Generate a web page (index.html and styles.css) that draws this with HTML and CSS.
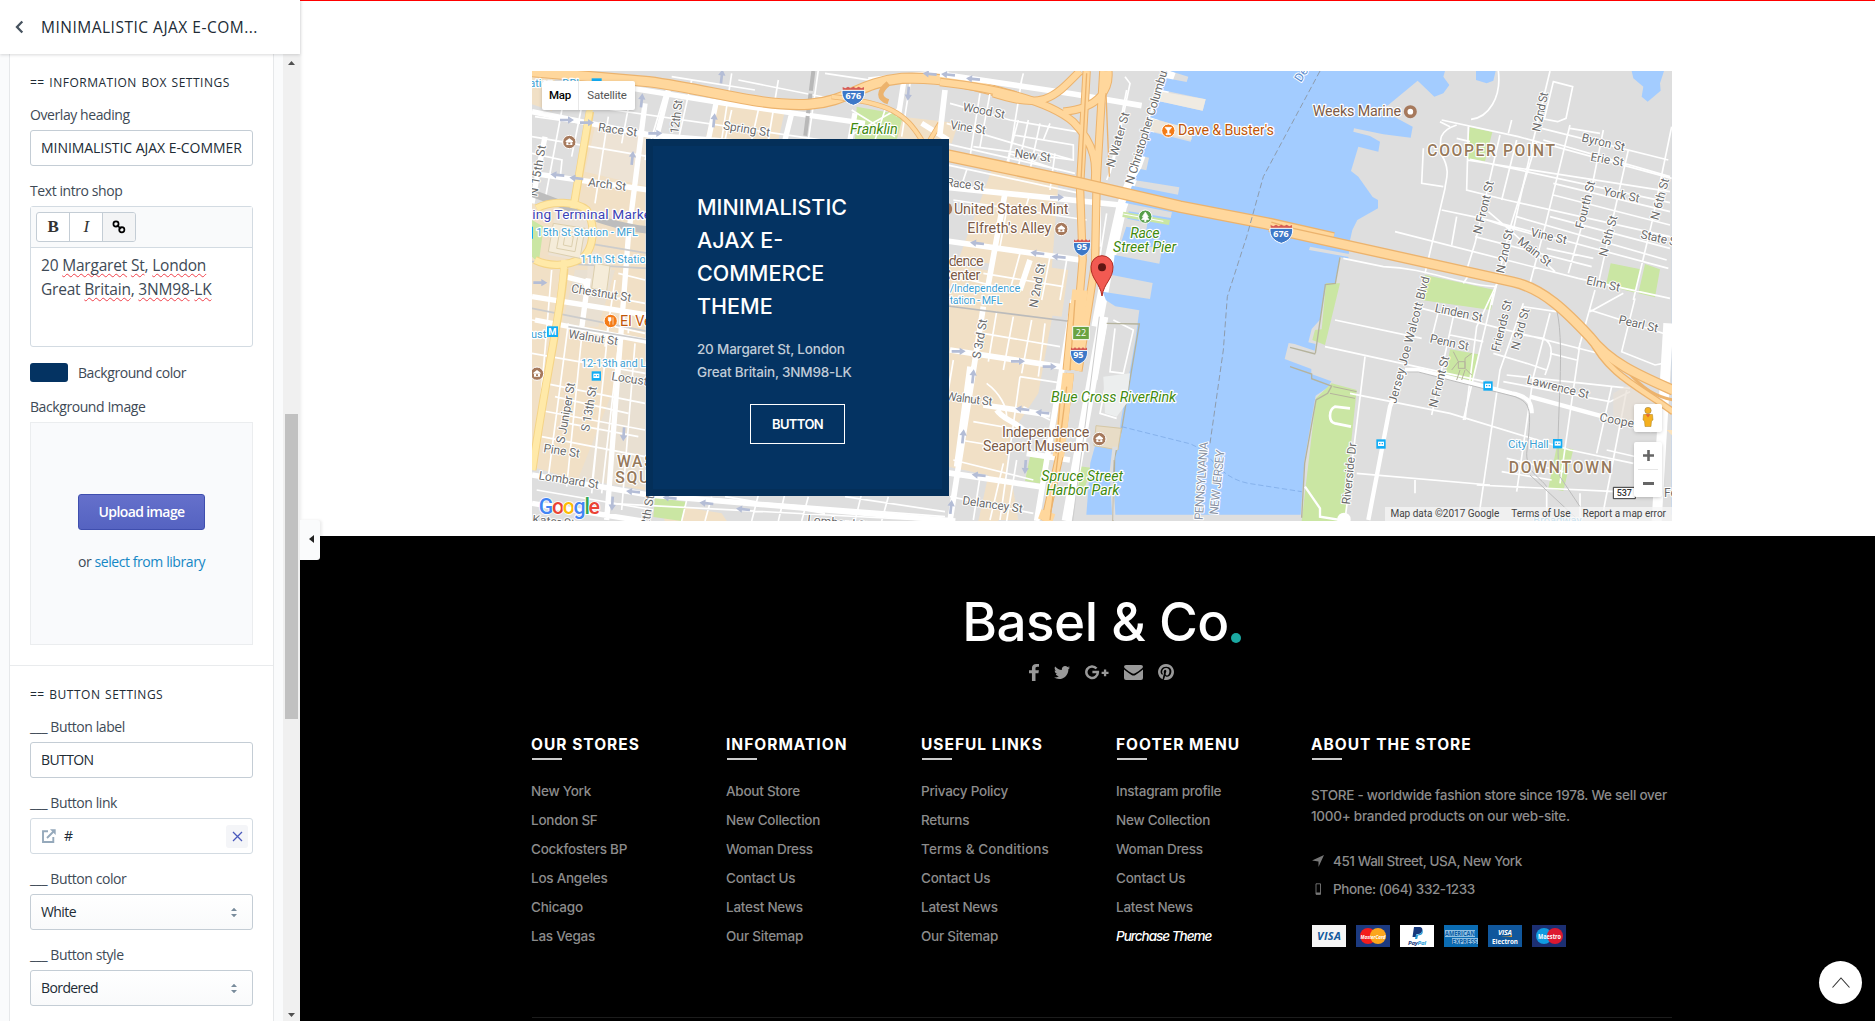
FILE: index.html
```html
<!DOCTYPE html>
<html lang="en">
<head>
<meta charset="utf-8">
<title>Theme editor</title>
<link rel="stylesheet" href="styles.css">
</head>
<body>
<div class="app">
  <aside class="sidebar">
    <header class="sidebar-head">
      <svg class="back" width="9" height="14" viewBox="0 0 9 14"><path d="M7.3 1.5 2 7l5.3 5.5"/></svg>
      <h1>MINIMALISTIC AJAX E-COM...</h1>
    </header>
    <div class="sidebar-body">
      <div class="panel">
        <section class="group">
          <h2>== INFORMATION BOX SETTINGS</h2>
          <label>Overlay heading</label>
          <div class="input">MINIMALISTIC AJAX E-COMMER</div>
          <label>Text intro shop</label>
          <div class="editor">
            <div class="toolbar"><div class="tools"><span class="tool"><b>B</b></span><span class="tool"><i>I</i></span><span class="tool active"><svg width="14" height="14" viewBox="0 0 14 14"><g fill="none" stroke="#000" stroke-width="1.700"><circle cx="4" cy="4" r="2.6"/><circle cx="9.8" cy="9.8" r="2.6"/><path d="M5 5l4 4"/></g></svg></span></div></div>
            <div class="editor-text">20 <u>Margaret</u> <u>St</u>, <u>London</u><br>Great <u>Britain</u>, <u>3NM98</u>-<u>LK</u></div>
          </div>
          <div class="swatch-row"><span class="swatch"></span><span>Background color</span></div>
          <label>Background Image</label>
          <div class="dropzone">
            <button class="upload">Upload image</button>
            <p>or <a>select from library</a></p>
          </div>
        </section>
        <section class="group">
          <h2>== BUTTON SETTINGS</h2>
          <label>___ Button label</label>
          <div class="input short">BUTTON</div>
          <label>___ Button link</label>
          <div class="input link">
            <svg width="14" height="14" viewBox="0 0 14 14"><path d="M6 2.2H1V13h10.300V8M5 9l6.500-6.500" fill="none" stroke="#95a9bb" stroke-width="1.900"/><path d="M8 .3h5.700V6z" fill="#95a9bb"/></svg>
            <span>#</span>
            <span class="clear"><svg width="11" height="11" viewBox="0 0 11 11"><path d="M1 1l9 9M10 1l-9 9" stroke="#4959bd" stroke-width="1.300"/></svg></span>
          </div>
          <label>___ Button color</label>
          <div class="input select"><span>White</span><svg width="8" height="11" viewBox="0 0 8 11"><path d="M1 4h6L4 .7zM1 7h6L4 10.300z"/></svg></div>
          <label>___ Button style</label>
          <div class="input select"><span>Bordered</span><svg width="8" height="11" viewBox="0 0 8 11"><path d="M1 4h6L4 .7zM1 7h6L4 10.300z"/></svg></div>
        </section>
      </div>
      <div class="scrollbar"><svg width="7" height="4" viewBox="0 0 7 4"><path d="M0 4l3.500-4L7 4z"/></svg><div class="thumb"></div><svg width="7" height="4" viewBox="0 0 7 4"><path d="M0 0l3.500 4L7 0z"/></svg></div>
    </div>
    <div class="collapse"><svg width="5" height="8" viewBox="0 0 5 8"><path d="M5 0v8L0 4z"/></svg></div>
  </aside>

  <main class="preview">
    <div class="map-section">
      <div class="map">
        <svg class="map-canvas" width="1140" height="450" viewBox="21 33 3420 1350">
          <defs>
            <g id="shield"><path d="M-34 -16h68c2 22-10 38-34 45-24-7-36-23-34-45z" fill="#3c78c8" stroke="#fff" stroke-width="3"/><path d="M-32-18v-8l8 4 8-5 8 5 8-5 8 5 8-5 8 5 8-4v8z" fill="#d65a55"/></g>
            <g id="arrow"><path d="M-20-4H4v-7l18 11L4 11V4h-24z" fill="#b4bdd6"/></g>
            <g id="museum"><circle r="20" fill="#a6795c" stroke="#fff" stroke-width="3"/><path d="M-11-3L0-11 11-3v3h-22zM-9 1h18v8H-9z" fill="#fff"/><path d="M-3 2h6v5h-6z" fill="#a6795c"/></g>
            <g id="stop"><path d="M-14-14h28v28h-28z" fill="#12adf5"/><path d="M-9-7H9V6H-9z" fill="#fff"/><path d="M-6-3h4v4h-4zM2-3h4v4H2z" fill="#12adf5"/></g>
          </defs>
          <rect x="21" y="33" width="3420" height="1350" fill="#dedede"/>

          <!-- commercial blocks and parks, west side -->
          <g fill="#f1e0c6">
            <path d="M21 430L140 450l50-260 170 40v1060l-240-40L21 1220z"/>
            <path d="M21 33l70 20-10 100-60-20zM570 130l210 20-20 90H540zM215 190l150 30v140l-180-30zM1400 330l200 40-20 260-280-30zM1270 610l330 60-60 330-80 120-50 260h70l-20-120-190-40z"/>
            <path d="M1100 230l180 20 20-60-170-20zM410 1330l180 30 20 30H420zM1410 600l220 30-20 140-240-30zM1400 1200h50l-30 183h-60z"/>
          </g>
          <path d="M150 630h120l-50 170H110zM300 900h60v380H150z" fill="#dfdfdf" opacity=".45"/>
          <g fill="#ede3d5"><path d="M210 200l160 30v150l-190-45zM190 570l75 25-20 100-60-10zM90 455h110l-20 150-110-20z"/></g>
          <g fill="#cae6a3"><path d="M995 140l140 25-20 75H990zM21 480l35 20-15 110-20-20zM390 1313l92 12-12 58-85-12zM1515 1190l60 8-15 75-60-10zM1658 1218l40 5-20 65h-30z"/></g>

          <!-- streets, west side -->
          <g fill="none" stroke="#fff" stroke-width="5">
            <path d="M120 100L60 420M250 170l-40 260M420 100l-60 200M620 150l-20 90M760 60l-30 180M880 30l-30 210M1160 40l-30 190M1080 150l-30 90M100 50l700 110M60 120l900 130M30 170l500 70M21 230l350 60M180 90l-40 200M500 60l-40 180M620 40l-30 200M700 150l-20 90M320 90l-30 160M21 280l90 20-5 50M440 50l250 40M900 40l200 30M640 60l300 60M980 150l130 80M1130 140l-160 90"/>
            <path d="M80 630l-50 600M130 790L70 1250M175 780l-50 500M250 800l-50 500M280 860l-50 440M230 1000l-30 280M330 850l-40 500M21 880l340 60M60 970l300 60M40 1050l320 60M50 1130l310 60M35 1290l350 60M130 1090l210 40M90 1010l220 50M21 780l180 30M270 660l-30 200M200 700l160 30M280 640l80 20M270 800l90 20M310 760v60"/>
            <path d="M490 1300l-20 83M560 1310l-20 73M700 1305l-20 78M780 1300l-20 83M850 1310l-20 73M1010 1300l-20 83M1090 1310l-20 73M250 1330l1000 53M480 1310l780 60M600 1310l300 50M960 1310l300 45"/>
          </g>
          <g fill="none" stroke="#fff" stroke-width="16">
            <path d="M21 155l350 70 500 40M60 230L21 430M21 340l350 50M360 130l-50 400-65 850M21 710l345 55M30 780l340 65M21 1245l350 60 920 78M21 1330l330 53M430 90L390 250M575 120l-25 120M800 160l-20 80M990 160l-15 80M290 80L600 130l420 60M190 655l-20 150M120 650l60 15 10 25M1030 60l240-25M1140 40l-20 130M1190 190l80 50"/>
          </g>
          <path d="M21 400c120 40 220 100 350 110" fill="none" stroke="#bdbdbd" stroke-width="22"/>
          <path d="M21 605l345 20M190 550l180 30M130 800l240 40M21 745l350 70" fill="none" stroke="#ccc" stroke-width="5"/>
          <g fill="none" stroke="#f5d486" stroke-width="25"><path d="M195 155L145 445M35 445c45-25 120-20 150 5 30 50 20 120-15 145-45 25-100 25-140 5M118 625C110 750 70 900 22 1230"/></g>
          <g fill="none" stroke="#ffe9a8" stroke-width="19"><path d="M195 145L145 445M35 445c45-25 120-20 150 5 30 50 20 120-15 145-45 25-100 25-140 5M118 600C110 750 70 900 22 1230"/></g>
          <g fill="#f5ecd9" stroke="#dccfae" stroke-width="3"><path d="M85 490l95 15-15 90-95-20zM105 510l55 10-10 55-55-10zM120 525l25 5-5 30-25-5zM210 610l45 8-10 75-45-8z"/></g>
          <path d="M865 33l-25 200" stroke="#b8b8b8" stroke-width="12" fill="none" stroke-dasharray="60 8"/>

          <!-- highway across the north-west -->
          <g fill="none" stroke="#ecb36d" stroke-width="34"><path d="M21 35l350 30c190 25 330 75 480 68 120-8 150-65 280-78 150-5 230 25 340 55"/></g>
          <g fill="none" stroke="#ffd79c" stroke-width="27"><path d="M21 35l350 30c190 25 330 75 480 68 120-8 150-65 280-78 150-5 230 25 340 55"/></g>
          <path d="M920 110c180 20 220 50 270 130M1090 70c-30 25-30 45 0 55M1245 190l-30 50" fill="none" stroke="#ecb36d" stroke-width="16"/>
          <path d="M920 110c180 20 220 50 270 130M1245 190l-30 50" fill="none" stroke="#ffd79c" stroke-width="11"/>

          <!-- central district and river -->
          <g transform="translate(1245 0)">
            <g fill="none" stroke="#fff" stroke-width="5">
              <path d="M120 100L90 290M150 100l-30 160M245 60l-40 250M235 180l-40 150M265 180l-30 140M300 190l-30 140M330 190l-20 50M30 130l180 50 200 35M20 190l200 60 180 50M15 250l390 90M100 260l300 40V255l-180-30M205 280l150 50M345 280l-15 110M0 310l420 90M80 330l-20 60M555 50l15 20-50 240-20 50M560 90l-50 250M250 40l-10 40"/>
              <path d="M200 450l-20 110M270 400l-15 50M40 420l400 60M240 580l-30 110M330 590l-25 130M380 600l-20 120M130 640l240 40M10 640l200 50M170 755l-25 150M220 770l-30 160M275 780l-30 160M315 790l-20 160M130 820l230 40M40 900l-20 120M240 950l-60 430M140 970c40 30 60 70 60 100M240 950l130 20M100 1085l200 35M250 1040l80 40M40 1200l240 60M120 1250l-20 130M190 1210l-40 170M30 1310l250 50M60 1140l180 30M230 1200l-30 183"/>
              <path d="M480 440v120M500 460l-25 160M470 780l30 10-30 170M520 780l60 30-30 130-40-5 15-130M500 960l-20 100 50 15"/>
            </g>
            <g fill="none" stroke="#fff" stroke-width="17">
              <path d="M0 42l400 60 205 35M15 90L0 220M195 400L140 700M0 380l540 55M0 540l420 60M130 740L30 1383M30 870l330 50M90 920l-40 300M130 1035l200 30M170 1050c20 30 50 30 80 60M0 1235l300 45M260 1180l130 20M400 720L290 1383M270 600l-30 90"/>
              <path d="M490 770L380 1383" stroke-width="30"/><path d="M692 33L545 440 500 640 470 800" stroke-width="32"/>
            </g>
            <path d="M478 770L398 1383" fill="none" stroke="#cecece" stroke-width="3"/>
            <path d="M0 735l380 48c60-5 40-60 42-90" fill="none" stroke="#bbb" stroke-width="5"/>

            <path fill="#a3ccff" d="M690 33l55 17-5 16-60-11-15 35 132 28-9 34-133-30-25 50 130 40-8 33-128-32-18 75 21 5-8 38-17-4-20 33 136 22-4 22-138-27-20 52 140 28-4 17-126-20-4 22 60 12-3 22-60-10-15 45 122 22-8 44-134-26-8 60 122 24-8 48-142-22 10 26 28 18 72 12-12 90-43 238-7 60-70 15-15 55-12 155H2196V33z"/>
            <path d="M500 790l98 2-52 310-22 90-4 190" fill="none" stroke="#b5b39d" stroke-width="4"/>
            <path d="M468 1097l76 8-10 65-72-13z" fill="#e8dcc6" stroke="#d5c7a5" stroke-width="3"/>
            <path d="M532 1165h-10l-8 70 8 146" fill="none" stroke="#dedede" stroke-width="10"/>
            <path d="M522 1200l-4 183" fill="none" stroke="#b5a98d" stroke-width="2"/>
            <path d="M490 950l80-10-10 90-30 40-35-10z" fill="#eceeee"/>
            <path d="M665 95l132 23-9 34-130-28z" fill="#f0ebe2"/><path d="M630 175l130 33-6 32-125-28z" fill="#ece5da"/>
            <path d="M550 455l140 25-3 15-140-24z" fill="#cae6a3"/><path d="M550 462l120 22" stroke="#fff" stroke-width="3"/>

            <!-- interstate 95 and the bridge -->
            <g fill="none" stroke="#ecb36d" stroke-width="25">
              <path d="M0 66c180 20 330 60 400 120 90 90 60 170 65 190M440 33L420 380l8 220-28 330M490 33l-20 330-5 250-50 320M400 730l-20 200M390 940l-30 240M360 1180l-45 203M160 100c150 50 180 15 260-67M370 155c110-10 140-70 135-122" />
            </g>
            <g fill="none" stroke="#ffd79c" stroke-width="19">
              <path d="M0 66c180 20 330 60 400 120 90 90 60 170 65 190M440 33L420 380l8 220-28 330M490 33l-20 330-5 250-50 320M400 730l-20 200M390 940l-30 240M360 1180l-45 203M160 100c150 50 180 15 260-67M370 155c110-10 140-70 135-122" />
            </g>
            <g fill="none" stroke="#ffd79c"><path d="M420 690L395 925" stroke-width="46"/><path d="M385 940L355 1190" stroke-width="34"/><path d="M325 1355l-10 28" stroke-width="44"/></g>
            <path d="M405 720l-15 210M380 980l-50 400M362 1000l-14 180M440 40l-18 340M498 100l10 250" fill="none" stroke="#ecb36d" stroke-width="4"/>
            <path d="M0 282l420 88 300 70 260 50 200 45" fill="none" stroke="#ecb36d" stroke-width="38"/>
            <path d="M0 282l420 88 300 70 260 50 200 45" fill="none" stroke="#ffd79c" stroke-width="30"/>

            <path d="M1140 33L970 350 920 530 862 710 850 870 810 1150" fill="none" stroke="#8e9cad" stroke-width="3" stroke-dasharray="18 9"/>
            <path d="M545 1100l200 50c70 20 80 100 180 120l160 25" fill="none" stroke="#86b2ec" stroke-width="3" stroke-dasharray="16 8"/>
          </g>

          <!-- Camden side -->
          <g transform="translate(2295 0)">
            <path fill="#dedede" d="M1146 33H465l-5 17 18 25-18 25-27 10-50-48-88 73-23 15 46 23 50 27-6 33-82-10-88-18-2 10 50 13 30 17-5 30-60-15-22 73 22 17 43 61 16 9v25l-62 35-15 30-7 31-5 55-25-5-15 80-27 3-3 20-15 85-25 28-10 40 22 5-3 20-60-20-18-3-12 48 80 30v15l60 22-10 18-37 25-33 190-13 183h1114z"/>
            <path fill="#dedede" d="M60 560l160 30-5 8-158-28z"/>
            <path fill="#a3ccff" d="M558 33v27l32 10 20-8 7-29zM1025 33l5 22 30 25-5 30 18 15 39-33-2-22 12-37z"/>
            <g fill="#cae6a3"><path d="M540 202l67 14-22 88-57-10zM962 610l90 18-16 70-88-22zM1065 612l45 16-15 84-50-12zM405 645l210 45-12 60-210-30zM108 670h42l-45 185-38-15 8-30 20-2zM125 970l75 20-20 190-15 203H35l43-368zM480 868l85 15-18 80-80-20zM800 1160l50 8-30 125-45-8z"/></g>
            <path d="M150 592l-14 78-30 4-30 206" fill="none" stroke="#b5b39d" stroke-width="4"/>
            <path d="M0 862l76 20M0 920l65 22v14l60 22-12 22-35 20-34 190-9 163" fill="none" stroke="#b5b39d" stroke-width="4"/>
            <path d="M120 1000l75 15M130 980l70 15" stroke="#b5b39d" stroke-width="3"/>
            <path d="M180 1045l-45-5c-20 10-20 45 0 50l48 10" fill="none" stroke="#fff" stroke-width="8"/>
            <path d="M45 1280l45 65v25l60 10" fill="none" stroke="#fff" stroke-width="7"/>
            <circle cx="162" cy="1378" r="20" fill="#fff"/>

            <g fill="none" stroke="#fff" stroke-width="7">
              <path d="M455 180l230 50 460 125M625 33c10 80-30 140-82 145M780 33L730 240 645 620 560 800 525 1080M480 200l-30-15M500 195c-60 20-50 50-45 90 30 50 10 80 10 100L405 640M400 265l-5 105 65 10M535 200l-5 190 120 30 490 110M540 298l600 130M500 235l40 10M530 300l610 95" stroke-width="5"/>
              <path d="M455 450l120 25 560 150M315 515l550 140 275 60M630 225l-75 325-25 80M680 240l-45 180M740 245l-80 260-55 230M840 195L765 500l-45 170M940 210l-40 200-65 230M1015 270l-90 400M1145 200l-60 290-55 230M665 180l-10 40M595 455l70 60 130 120M575 475l60 20 100 30M790 405l350 90M790 370l350 85M755 205l380 95M840 205l90 15M760 240l380 110M780 470l360 95M680 470l450 130M500 470l-15 85M770 565l140 30M555 530l350 90M790 65l58 15-20 95-25 10-40-8z" stroke-width="5"/>
              <path d="M160 595l120 25c140 5 220 55 340 60M540 640l-20 30M135 780l260 55M105 860l480 105M395 745l550 140M445 755l-20 80M490 770l-65 295M610 700L520 1080M700 730l-70 200-65 450M780 760l-50 190-50 345M700 740l100 15M640 965l320 60 60-30M650 945l370 40M670 820l90 15c40 20 20 70 5 110M480 825l100 20M780 880l80 20M610 880l100 30 60 20M870 850l-60 420M915 690l-50 180M1000 700l-100 55M1035 715l-40 160 100 40 25-5M900 750l250 80M965 980l-45 200M1010 990l-75 390M180 1000l300 60 360 110 190 40M225 890l-60 490M200 1240l400 35M560 1275l420 20M375 1260v40M770 1290v90M870 1300v70M635 1235l150 25M650 1195l170 40M950 1170l130 30" stroke-width="5"/>
            </g>
            <path d="M345 930l-45 110-65 340M345 930h40l280 70c60 10 60 40 60 60M720 1010l220 60" fill="none" stroke="#fff" stroke-width="13"/>
            <path d="M345 936l40 0 290 74c50 20 50 40 35 170 0 60 40 70 60 100M720 1245l150 140M800 750c30 120-10 400 10 500l60 90" fill="none" stroke="#bcbcbc" stroke-width="3"/>
            <path d="M1135 790l-35 593" stroke="#fff" stroke-width="30"/>
            <path d="M485 930l20-25-15-30M545 945l-20-20v-30l20-15M505 905h20v20h-20zM510 930l-10 30M525 930l-10 30" fill="none" stroke="#b5b39d" stroke-width="3"/>
            <path d="M970 1000l70-40 80 60-40 90-110-30z" fill="#e8e0d5" opacity=".7"/>
            <path d="M985 960l80-5-30 20M1130 1110h20v20z" fill="#fbe3bd"/>
            <g fill="none" stroke="#ecb36d" stroke-width="30"><path d="M-60 500L0 518l670 148c90 20 160 90 230 165 60 80 160 120 250 160" stroke-width="33"/><path d="M900 831c60 120 150 150 250 225" stroke-width="22"/><path d="M1010 930c50 60 90 80 140 90" stroke-width="9"/></g>
            <g fill="none" stroke="#ffd79c" stroke-width="24"><path d="M-60 500L0 518l670 148c90 20 160 90 230 165 60 80 160 120 250 160" stroke-width="25"/><path d="M900 831c60 120 150 150 250 225" stroke-width="14"/></g>
          </g>

          <!-- one-way arrows -->
          <use href="#arrow" x="125" y="180"/><use href="#arrow" x="185" y="188"/><use href="#arrow" x="45" y="668"/>
          <use href="#arrow" transform="translate(98 345) rotate(186)"/><use href="#arrow" transform="translate(155 355) rotate(186)"/><use href="#arrow" transform="translate(322 295) rotate(-84)"/><use href="#arrow" transform="translate(350 122) rotate(-84)"/><use href="#arrow" transform="translate(567 182) rotate(-84)"/><use href="#arrow" transform="translate(590 50) rotate(-84)"/><use href="#arrow" transform="translate(1150 100) rotate(94)"/><use href="#arrow" transform="translate(296 1122) rotate(94)"/><use href="#arrow" transform="translate(262 1330) rotate(94)"/>
          <use href="#arrow" transform="translate(325 1295) rotate(186)"/><use href="#arrow" transform="translate(435 1314) rotate(186)"/><use href="#arrow" transform="translate(545 1330) rotate(186)"/><use href="#arrow" transform="translate(655 1348) rotate(186)"/><use href="#arrow" transform="translate(1215 42) rotate(186)"/><use href="#arrow" transform="translate(1270 44) rotate(186)"/><use href="#arrow" transform="translate(1345 57) rotate(186)"/><use href="#arrow" x="390" y="220"/>
          <use href="#arrow" transform="translate(1595 412)"/><use href="#arrow" transform="translate(1357 550) rotate(186)"/><use href="#arrow" transform="translate(1538 580) rotate(186)"/><use href="#arrow" transform="translate(1602 591) rotate(186)"/><use href="#arrow" x="1300" y="874"/><use href="#arrow" x="1478" y="904"/><use href="#arrow" x="1573" y="920"/><use href="#arrow" transform="translate(1493 1048) rotate(186)"/><use href="#arrow" transform="translate(1553 1058) rotate(186)"/><use href="#arrow" transform="translate(1362 1246) rotate(186)"/><use href="#arrow" transform="translate(1501 1220) rotate(94)"/><use href="#arrow" transform="translate(1344 950) rotate(-84)"/><use href="#arrow" transform="translate(1314 1130) rotate(-84)"/><use href="#arrow" transform="translate(1278 1342) rotate(-84)"/>

          <!-- street labels -->
          <g class="street">
            <text transform="translate(218 213) rotate(8)" textLength="118">Race St</text>
            <text transform="translate(593 208) rotate(9)" textLength="142">Spring St</text>
            <text transform="translate(460 222) rotate(-83)" textLength="102">12th St</text>
            <text transform="translate(36 410) rotate(-80)" textLength="155">N 15th St</text>
            <text transform="translate(188 378) rotate(7)" textLength="115">Arch St</text>
            <text transform="translate(137 697) rotate(9)" textLength="182">Chestnut St</text>
            <text transform="translate(129 833) rotate(9)" textLength="150">Walnut St</text>
            <text transform="translate(258 960) rotate(9)">Locust St</text>
            <text transform="translate(118 1152) rotate(-80)" textLength="185">S Juniper St</text>
            <text transform="translate(192 1116) rotate(-80)" textLength="137">S 13th St</text>
            <text transform="translate(54 1176) rotate(9)" textLength="110">Pine St</text>
            <text transform="translate(40 1258) rotate(9)" textLength="182">Lombard St</text>
            <text transform="translate(368 1420) rotate(-80)">12th St</text>
            <text transform="translate(21 1390) rotate(6)">Kater St</text>
            <text transform="translate(846 1390) rotate(6)">Lombard St</text>
            <text transform="translate(1312 152) rotate(11)" textLength="128">Wood St</text>
            <text transform="translate(1274 206) rotate(9)" textLength="108">Vine St</text>
            <text transform="translate(1468 292) rotate(7)" textLength="108">New St</text>
            <text transform="translate(1262 378) rotate(7)" textLength="115">Race St</text>
            <text transform="translate(1767 324) rotate(-74)" textLength="170">N Water St</text>
            <text transform="translate(1824 375) rotate(-73)" textLength="372">N Christopher Columbus</text>
            <text transform="translate(1537 745) rotate(-80)" textLength="135">N 2nd St</text>
            <text transform="translate(1366 898) rotate(-80)" textLength="120">S 3rd St</text>
            <text transform="translate(1262 1020) rotate(7)" textLength="140">Walnut St</text>
            <text transform="translate(1311 1333) rotate(8)" textLength="182">Delancey St</text>
            <text transform="translate(2033 1381) rotate(-86)" textLength="235" fill="#8993a5">PENNSYLVANIA</text>
            <text transform="translate(2078 1365) rotate(-84)" textLength="195" fill="#8993a5">NEW JERSEY</text>
          </g>
          <g class="street" transform="translate(2295 0)">
            <text transform="translate(750 217) rotate(-78)" textLength="120">N 2nd St</text>
            <text transform="translate(873 244) rotate(13)" textLength="132">Byron St</text>
            <text transform="translate(900 302) rotate(10)" textLength="100">Erie St</text>
            <text transform="translate(938 405) rotate(12)" textLength="110">York St</text>
            <text transform="translate(1050 534) rotate(13)" textLength="120">State St</text>
            <text transform="translate(720 528) rotate(13)" textLength="110">Vine St</text>
            <text transform="translate(680 548) rotate(38)" textLength="118">Main St</text>
            <text transform="translate(887 672) rotate(13)" textLength="103">Elm St</text>
            <text transform="translate(573 524) rotate(-76)" textLength="162">N Front St</text>
            <text transform="translate(642 642) rotate(-78)" textLength="134">N 2nd St</text>
            <text transform="translate(880 508) rotate(-76)" textLength="146">Fourth St</text>
            <text transform="translate(950 592) rotate(-75)" textLength="126">N 5th St</text>
            <text transform="translate(1105 482) rotate(-75)" textLength="128">N 6th St</text>
            <text transform="translate(433 755) rotate(12)" textLength="145">Linden St</text>
            <text transform="translate(418 847) rotate(12)" textLength="118">Penn St</text>
            <text transform="translate(984 790) rotate(13)" textLength="120">Pearl St</text>
            <text transform="translate(628 877) rotate(-76)" textLength="158">Friends St</text>
            <text transform="translate(686 872) rotate(-75)" textLength="128">N 3rd St</text>
            <text transform="translate(440 1045) rotate(-76)" textLength="158">N Front St</text>
            <text transform="translate(318 1032) rotate(-75)" textLength="392">Jersey Joe Walcott Blvd</text>
            <text transform="translate(708 970) rotate(14)" textLength="192">Lawrence St</text>
            <text transform="translate(927 1083) rotate(11)" textLength="160">Cooper St</text>
            <text transform="translate(180 1334) rotate(-84)" textLength="186">Riverside Dr</text>
            <text x="1122" y="1312">Fe</text>
            <text transform="translate(32 68) rotate(-57)" fill="#5b8dd0">Delaware</text>
          </g>

          <!-- places -->
          <g class="place transit">
            <text x="2" y="82">tation - DRL</text>
            <text x="34" y="527" textLength="305">15th St Station - MFL</text>
            <text x="166" y="608" textLength="214">11th St Station</text>
            <text x="168" y="922" textLength="275">12-13th and Locust</text>
            <text x="18" y="835">ust</text>
            <text x="1274" y="697" textLength="212">/Independence</text>
            <text x="1274" y="732" textLength="158">tation - MFL</text>
            <text x="2949" y="1163" font-size="35" textLength="122">City Hall</text>
            <text x="3025" y="1393">Broadway</text>
            <text x="-2" y="477" font-size="41" fill="#3d43b5" textLength="394">ding Terminal Market</text>
          </g>
          <path d="M200 55h30v20h-30z" fill="#12adf5"/><path d="M21 500h3v36h-3z" fill="#12adf5"/>
          <path d="M66 799h33v32H66z" fill="#12adf5"/><text x="82" y="825" text-anchor="middle" font-size="28" font-weight="700" fill="#fff">M</text>
          <use href="#stop" x="214" y="948"/><use href="#stop" x="2889" y="978"/><use href="#stop" x="2568" y="1152"/><use href="#stop" x="3098" y="1151"/>
          <g class="place parkname">
            <text x="975" y="221" textLength="143">Franklin</text>
            <text x="1816" y="533" textLength="88">Race</text><text x="1764" y="576" textLength="190">Street Pier</text>
            <text x="1578" y="1026" textLength="375">Blue Cross RiverRink</text>
            <text x="1549" y="1263" textLength="245">Spruce Street</text><text x="1563" y="1305" textLength="220">Harbor Park</text>
          </g>
          <g class="place">
            <text x="1287" y="462" textLength="343">United States Mint</text>
            <text x="1327" y="519" textLength="252">Elfreth's Alley</text>
            <text x="1250" y="618" textLength="126">ndence</text><text x="1250" y="660" textLength="116">Center</text>
            <text x="1431" y="1132" textLength="262">Independence</text><text x="1374" y="1174" textLength="318">Seaport Museum</text>
            <text x="2363" y="169" textLength="265">Weeks Marine</text>
            <g fill="#c0560a"><text x="1959" y="225" textLength="288">Dave &amp; Buster's</text><text x="285" y="798">El Vez</text></g>
          </g>
          <g class="place area">
            <text x="2707" y="289" textLength="388">COOPER POINT</text><text x="2951" y="1240" textLength="315">DOWNTOWN</text>
            <text x="276" y="1221">WASH</text><text x="271" y="1270">SQUARE</text>
          </g>
          <use href="#museum" x="133" y="246"/><use href="#museum" x="36" y="941"/><use href="#museum" x="1609" y="507"/><use href="#museum" x="1723" y="1137"/>
          <path d="M1272 430a20 20 0 0 1 0 34z" fill="#a6795c"/>
          <circle cx="2656" cy="155" r="14" fill="#fff" stroke="#a6795c" stroke-width="11"/>
          <g stroke="#fff" stroke-width="3"><circle cx="1930" cy="212" r="20" fill="#f47b16"/><circle cx="257" cy="783" r="20" fill="#f47b16"/><circle cx="1861" cy="470" r="20" fill="#579f4a"/></g>
          <path d="M1920 202h20l-8 10v9h5v3h-14v-3h5v-9zM250 772v8a4 4 0 0 0 8 0v-8M254 780v14M264 772v22M1861 456l9 14h-4l6 9h-9v6h-4v-6h-9l6-9h-4z" fill="#fff" stroke="#fff" stroke-width="2"/>
          <g class="route">
            <use href="#shield" x="985" y="107"/><text x="985" y="116">676</text>
            <use href="#shield" x="2269" y="521"/><text x="2268" y="530">676</text>
            <use href="#shield" transform="translate(1671 562) scale(.75 .9)"/><text x="1671" y="571">95</text>
            <use href="#shield" transform="translate(1662 886) scale(.75 .9)"/><text x="1660" y="895">95</text>
            <path d="M1643 799h50v40h-50z" fill="#6aa342" stroke="#fff" stroke-width="3"/><text x="1668" y="829" font-weight="400">22</text>
          </g>
          <path d="M3265 1282h66v34h-66z" fill="#fff" stroke="#333" stroke-width="3"/><text x="3298" y="1309" text-anchor="middle" font-size="27" fill="#333" font-weight="500">537</text>

          <!-- marker -->
          <path d="M1731 708c-6-40-33-50-33-88a33 33 0 0 1 66 0c0 38-27 48-33 88z" fill="#f25a52" stroke="#b02a22" stroke-width="3"/>
          <circle cx="1731" cy="622" r="12" fill="#5f1613"/>

          <!-- wordmark -->
          <text class="wordmark" x="41" y="1362" textLength="184"><tspan fill="#4285f4">G</tspan><tspan fill="#ea4335">o</tspan><tspan fill="#fbbc05">o</tspan><tspan fill="#4285f4">g</tspan><tspan fill="#34a853">l</tspan><tspan fill="#ea4335">e</tspan></text>
        </svg>

        <div class="map-type"><b>Map</b><span>Satellite</span></div>
        <div class="map-controls">
          <div class="pegman"><svg width="12" height="20" viewBox="0 0 12 20"><circle cx="6" cy="3.500" r="3.200" fill="#f5b01e" stroke="#8b7a5a" stroke-width=".5"/><path d="M1.500 7.500h9L11 13l-1.500 1L9 19.500H3L2.500 14 1 13z" fill="#f5b01e" stroke="#a8801f" stroke-width=".5"/><path d="M3.500 7.300h5L6 10.500z" fill="#e8662a"/></svg></div>
          <div class="zoom"><span><svg width="11" height="11" viewBox="0 0 11 11"><path d="M4.200 0h2.600v4.200H11v2.600H6.800V11H4.200V6.800H0V4.200h4.200z"/></svg></span><span><svg width="11" height="3" viewBox="0 0 11 3"><path d="M0 0h11v3H0z"/></svg></span></div>
        </div>
        <div class="map-legal"><span>Map data ©2017 Google</span><span>Terms of Use</span><span>Report a map error</span></div>
        <div class="overlay">
          <h2>MINIMALISTIC<br>AJAX E-<br>COMMERCE<br>THEME</h2>
          <p>20 Margaret St, London<br>Great Britain, 3NM98-LK</p>
          <a class="cta">BUTTON</a>
        </div>
      </div>
    </div>

    <footer class="footer">
      <div class="logo">Basel &amp; Co<span class="dot"></span></div>
      <div class="social">
        <svg width="10" height="17" viewBox="479 0 864 1664" preserveAspectRatio="none"><path d="M1343 12v264h-157q-86 0-116 36t-30 108v189h293l-39 296h-254v759h-306v-759h-255v-296h255v-218q0-186 104-288.500t277-102.500q147 0 228 12z"/></svg>
        <svg width="16" height="13" viewBox="108 256 1576 1280" preserveAspectRatio="none"><path d="M1684 408q-67 98-162 167 1 14 1 42 0 130-38 259.500t-115.500 248.500-184.500 210.500-258 146-323 54.500q-271 0-496-145 35 4 78 4 225 0 401-138-105-2-188-64.500t-114-159.500q33 5 61 5 43 0 85-11-112-23-185.500-111.500t-73.500-205.500v-4q68 38 146 41-66-44-105-115t-39-154q0-88 44-163 121 149 294.500 238.500t371.500 99.500q-8-38-8-74 0-134 94.500-228.500t228.500-94.500q140 0 236 102 109-21 205-78-37 115-142 178 93-10 186-50z"/></svg>
        <svg width="24" height="15" viewBox="0 0 25 15"><path d="M12 3.300A6 6 0 1 0 13.400 7H7.700" fill="none" stroke="#999" stroke-width="2.600"/><path d="M19.700 4.500h2.400v2.300h2.400v2.300h-2.400v2.400h-2.400V9.100h-2.400V6.800h2.400z"/></svg>
        <svg width="19" height="15" viewBox="0 0 19 15"><path d="M0 2Q0 0 2 0h15q2 0 2 2Q18 4 11.500 8q-2 1.500-4 0Q1 4 0 2z"/><path d="M0 4.600q3 2.600 7.500 5.400 2 1 4 0 4.500-2.800 7.500-5.400V13q0 2-2 2H2q-2 0-2-2z"/></svg>
        <svg width="16" height="16" viewBox="128 128 1536 1536"><path d="M1664 896q0 209-103 385.500t-279.500 279.500-385.500 103q-111 0-218-32 59-93 78-164 9-34 54-211 20 39 73 67.500t114 28.500q121 0 216-68.500t147-188.500 52-270q0-114-59.500-214t-172.500-163-255-63q-105 0-196 29t-154.500 77-109 110.500-67 129.500-21.500 134q0 104 40 183t117 111q30 12 38-20 2-7 8-31t8-30q6-23-11-43-51-61-51-151 0-151 104.500-259.500t273.500-108.500q151 0 235.500 82t84.500 213q0 170-68.500 289t-175.500 119q-61 0-98-43.500t-23-104.500q8-35 26.500-93.500t30-103 11.500-75.500q0-50-27-83t-77-33q-62 0-105 57t-43 142q0 73 25 122l-99 418q-17 70-13 177-206-91-333-281t-127-423q0-209 103-385.500t279.500-279.500 385.500-103 385.500 103 279.500 279.500 103 385.500z"/></svg>
      </div>
      <div class="columns">
        <div class="col"><h3>OUR STORES</h3><ul><li>New York</li><li>London SF</li><li>Cockfosters BP</li><li>Los Angeles</li><li>Chicago</li><li>Las Vegas</li></ul></div>
        <div class="col"><h3>INFORMATION</h3><ul><li>About Store</li><li>New Collection</li><li>Woman Dress</li><li>Contact Us</li><li>Latest News</li><li>Our Sitemap</li></ul></div>
        <div class="col"><h3>USEFUL LINKS</h3><ul><li>Privacy Policy</li><li>Returns</li><li class="wide">Terms &amp; Conditions</li><li>Contact Us</li><li>Latest News</li><li>Our Sitemap</li></ul></div>
        <div class="col"><h3>FOOTER MENU</h3><ul><li>Instagram profile</li><li>New Collection</li><li>Woman Dress</li><li>Contact Us</li><li>Latest News</li><li class="promo">Purchase Theme</li></ul></div>
        <div class="col about">
          <h3>ABOUT THE STORE</h3>
          <p>STORE - worldwide fashion store since 1978. We sell over<br>1000+ branded products on our web-site.</p>
          <div class="contact"><svg width="12" height="12" viewBox="0 0 12 12"><path d="M12 0L6.500 12V6.500L0 5.500z"/></svg><span class="address">451 Wall Street, USA, New York</span></div>
          <div class="contact"><svg width="12" height="12" viewBox="0 0 12 12"><path d="M4 .8h4.500v10.500H4z" fill="none" stroke="#888" stroke-width=".8"/><path d="M4 9.500h4.500v2H4z"/></svg><span class="address">Phone: (064) 332-1233</span></div>
          <div class="cards">
            <svg width="34" height="22" viewBox="0 0 34 22"><path fill="#f5f5f5" d="M0 0h34v22H0z"/><text x="5" y="15" font-size="11" textLength="24" fill="#135a9e" font-style="italic">VISA</text></svg>
            <svg width="34" height="22" viewBox="0 0 34 22"><path fill="#1c3a80" d="M0 0h34v22H0z"/><circle cx="12" cy="11" r="8" fill="#f41c1c"/><circle cx="22" cy="11" r="8" fill="#fba61c"/><text x="4.500" y="13.500" font-size="6" textLength="25" lengthAdjust="spacingAndGlyphs" fill="#fff" font-style="italic">MasterCard</text></svg>
            <svg width="34" height="22" viewBox="0 0 34 22"><path fill="#fff" d="M0 0h34v22H0z"/><path d="M14 2h5c3 0 4 2 3 4.500S19 9 16.500 9L16 12h-3.500z" fill="#16387c"/><path d="M22 4.500c2 3 0 6-4 6l-.8 3.500H15l1-4.500c4 0 6-1 6-5z" fill="#239bd8"/><text x="8" y="19.500" font-size="6" textLength="18" fill="#16387c" font-style="italic">Pay<tspan fill="#239bd8">Pal</tspan></text></svg>
            <svg width="34" height="22" viewBox="0 0 34 22"><path fill="#0b6cb3" d="M0 0h34v22H0z"/><path d="M1 5h30v7H1zM8 13h26v6H8z" fill="#8fc0e4"/><g fill="#0b5da3" font-size="7"><text x="1" y="11" textLength="30" lengthAdjust="spacingAndGlyphs">AMERICAN</text><text x="8" y="18.500" textLength="25" lengthAdjust="spacingAndGlyphs">EXPRESS</text></g></svg>
            <svg width="34" height="22" viewBox="0 0 34 22"><path fill="#10579c" d="M0 0h34v22H0z"/><path d="M13 11q6 2 11-1v2z" fill="#f0a030"/><g fill="#fff"><text x="10" y="9.500" font-size="7" textLength="14" font-style="italic">VISA</text><text x="4" y="19" font-size="6.500" textLength="26" lengthAdjust="spacingAndGlyphs">Electron</text></g></svg>
            <svg width="34" height="22" viewBox="0 0 34 22"><path fill="#1c2f72" d="M0 0h34v22H0z"/><circle cx="12" cy="11" r="8" fill="#119be0"/><circle cx="23" cy="11" r="8" fill="#dd1830"/><text x="6" y="13.500" font-size="7" textLength="23" lengthAdjust="spacingAndGlyphs" fill="#fff">Maestro</text></svg>
          </div>
        </div>
      </div>
      <div class="rule"></div>
    </footer>
    <div class="to-top"><svg width="18" height="11" viewBox="0 0 18 11"><path d="M.5 10.500L9 1l8.500 9.500"/></svg></div>
  </main>
</div>
</body>
</html>
```
FILE: styles.css
```css
* { box-sizing: border-box; margin: 0; padding: 0; }
body { width: 1875px; height: 1021px; overflow: hidden; background: #fff; font-family: "Open Sans", sans-serif; }
svg { display: block; flex: none; }
.app { display: flex; width: 1875px; height: 1021px; }

/* Sidebar */
.sidebar { position: relative; z-index: 2; width: 300px; height: 1021px; display: flex; flex-direction: column; background: #fafbfc; box-shadow: 0 0 4px rgba(0, 0, 0, .12); color: #3e4a56; font-size: 14px; letter-spacing: -.42px; }
.sidebar-head { position: relative; z-index: 1; height: 54px; flex: none; display: flex; align-items: center; gap: 17px; padding-left: 15px; background: #fff; box-shadow: 0 1px 3px rgba(63, 63, 68, .2); }
.sidebar-head h1 { font-size: 15.5px; font-weight: 400; letter-spacing: .5px; color: #212b35; line-height: 54px; }
.back { fill: none; stroke: #47535f; stroke-width: 2.3; }
.sidebar-body { flex: 1; min-height: 0; display: flex; overflow: hidden; }
.panel { width: 265px; margin-left: 9px; margin-right: 9px; background: #fff; border: solid #e6e8ea; border-width: 0 1px; }
.group { padding: 19px 20px 20px; border-bottom: 1px solid #e9ebed; width: 263px; }
.group h2 { font-size: 12px; font-weight: 400; letter-spacing: .5px; word-spacing: 1px; line-height: 20px; margin-bottom: 13px; color: #212b35; white-space: nowrap; }
.group label { display: block; line-height: 18px; margin-bottom: 6px; }
.input { height: 36px; border: 1px solid #c4cdd5; border-radius: 3px; background: #fff; padding: 0 10px; line-height: 34px; margin-bottom: 16px; color: #212b35; letter-spacing: -.05px; white-space: nowrap; overflow: hidden; }
.input.short { letter-spacing: -.6px; }
.input.link { display: flex; align-items: center; gap: 8px; padding-left: 11px; padding-right: 4px; border-color: #d3dbe2; }
.clear { margin-left: auto; width: 22px; height: 23px; display: flex; align-items: center; justify-content: center; background: #f4f5f8; border-radius: 3px; }
.input.select { display: flex; align-items: center; justify-content: space-between; padding-right: 14px; letter-spacing: -.6px; background: linear-gradient(#fff, #f9fafb); }
.select svg { fill: #798c9c; }
.editor { height: 141px; border: 1px solid #d3dbe2; border-radius: 3px; margin-bottom: 16px; }
.toolbar { height: 41px; padding: 5px; background: #f9fafb; border-bottom: 1px solid #d3dbe2; }
.tools { display: inline-flex; height: 30px; border: 1px solid #c4cdd5; border-radius: 3px; background: #fff; overflow: hidden; vertical-align: top; }
.tool { width: 33px; display: flex; align-items: center; justify-content: center; font: 17px "Liberation Serif", serif; color: #333; }
.tool:first-child { width: 32px; }
.tool + .tool { border-left: 1px solid #c4cdd5; }
.tool.active { background: #f3f4f5; }
.editor-text { padding: 5px 10px; font-size: 15.5px; line-height: 24px; letter-spacing: -.2px; }
.editor-text u { text-decoration: underline wavy #f0404a 1px; text-underline-offset: 2px; text-decoration-skip-ink: none; }
.swatch-row { display: flex; align-items: center; gap: 10px; height: 19px; margin-bottom: 16px; line-height: 18px; }
.swatch { width: 38px; height: 19px; border-radius: 3px; background: #043362; }
.dropzone { height: 223px; border: 1px solid #ebedef; background: #f9fafc; display: flex; flex-direction: column; align-items: center; padding-top: 71px; }
.upload { width: 127px; height: 36px; border: 1px solid #3f4eae; border-radius: 3px; background: linear-gradient(#6570cb, #5563c1); color: #fff; font: 600 14px "Open Sans", sans-serif; letter-spacing: -.6px; padding-bottom: 1px; margin-bottom: 22px; }
.dropzone p { line-height: 20px; white-space: nowrap; }
.dropzone a { color: #1587c5; }
.scrollbar { width: 17px; height: 967px; background: #f0f0f0; display: flex; flex-direction: column; align-items: center; padding: 7px 0 4px; }
.scrollbar svg { fill: #505050; }
.thumb { width: 13px; height: 305px; margin: 349px 0 auto; background: #c1c1c1; }
.collapse { position: absolute; left: 300px; top: 520px; width: 20px; height: 40px; background: #fafbfc; border-radius: 0 3px 3px 0; box-shadow: 2px 0 3px rgba(0, 0, 0, .08); display: flex; align-items: center; padding-left: 9px; }
.collapse svg { fill: #212121; margin-top: -2px; }

/* Store preview */
.preview { position: relative; width: 1575px; border-top: 1px solid #f00; font-family: Inter, sans-serif; font-size: 13.5px; font-weight: 500; }
.map-section { height: 535px; padding: 70px 0 0 232px; }
.map { position: relative; width: 1140px; height: 450px; overflow: hidden; font-family: Roboto, sans-serif; font-weight: 400; }
.map-canvas { font-family: Roboto, sans-serif; }
.street { font-size: 36px; fill: #6b6b6b; stroke: #fff; stroke-width: 6px; paint-order: stroke; stroke-linejoin: round; }
.place { font-size: 43px; fill: #7d5b47; stroke: #fff; stroke-width: 7px; paint-order: stroke; stroke-linejoin: round; }
.transit { fill: #3d9fd3; font-size: 33px; }
.parkname { fill: #3f8a10; font-style: italic; }
.area { fill: #977a5c; font-size: 47px; font-weight: 500; letter-spacing: 5px; }
.route { font: 700 27px "Open Sans", sans-serif; fill: #fff; text-anchor: middle; }
.wordmark { font-size: 64px; font-weight: 500; stroke: #fff; stroke-width: 5px; paint-order: stroke; }
.map-type { position: absolute; left: 10px; top: 10px; height: 29px; display: flex; background: #fff; border-radius: 2px; box-shadow: 0 1px 4px -1px rgba(0, 0, 0, .3); font-size: 11.5px; line-height: 29px; color: #565656; letter-spacing: -.2px; }
.map-type b { width: 37px; text-align: center; font-weight: 500; color: #000; border-right: 1px solid #e8e8e8; }
.map-type span { width: 56px; text-align: center; }
.map-controls { position: absolute; right: 10px; top: 333px; width: 28px; display: flex; flex-direction: column; gap: 10px; }
.map-controls > div { background: #fff; border-radius: 2px; box-shadow: 0 1px 4px -1px rgba(0, 0, 0, .3); }
.pegman { height: 28px; display: flex; align-items: center; justify-content: center; padding-bottom: 3px; }
.zoom { height: 55px; padding: 0 4px; display: flex; flex-direction: column; }
.zoom span { flex: 1; display: flex; align-items: center; justify-content: center; }
.zoom svg { fill: #666; }
.zoom span + span { border-top: 1px solid #e6e6e6; }
.map-legal { position: absolute; right: 0; bottom: 0; height: 14px; display: flex; gap: 12px; padding: 0 6px 0 5px; background: rgba(245, 245, 245, .75); font-size: 10px; line-height: 14px; color: #444; white-space: nowrap; }
.overlay { position: absolute; left: 114px; top: 68px; width: 303px; height: 357px; background: #043362; border: 7px solid #042f59; padding: 45px 45px 45px 44px; color: #fff; font-family: Inter, sans-serif; }
.overlay h2 { font-size: 21.5px; line-height: 33px; font-weight: 500; letter-spacing: 0; }
.overlay p { margin-top: 15px; font-size: 13.5px; line-height: 23px; font-weight: 500; letter-spacing: -.2px; color: #c0ccd8; white-space: nowrap; }
.cta { display: flex; align-items: center; justify-content: center; width: 95px; height: 40px; margin: 20px 0 0 53px; padding-bottom: 1px; border: 1px solid #fff; font-size: 13px; font-weight: 600; letter-spacing: -.6px; }

/* Footer */
.footer { height: 485px; background: #000; color: #8c8c8c; padding: 64px 203px 0 231px; letter-spacing: -.25px; }
.logo { display: flex; justify-content: center; align-items: flex-end; height: 45px; font-size: 53px; line-height: 45px; font-weight: 500; letter-spacing: -.5px; color: #fff; white-space: nowrap; }
.dot { width: 10px; height: 10px; border-radius: 50%; background: #1ba9a2; margin: 0 0 2px 2px; }
.social { display: flex; justify-content: center; align-items: center; gap: 15px; height: 18px; margin-top: 18px; }
.social svg { fill: #999; }
.columns { display: grid; grid-template-columns: 195px 195px 195px 195px 361px; margin-top: 52px; height: 284px; }
.col h3 { color: #fff; font-size: 15.5px; font-weight: 700; letter-spacing: 1px; line-height: 24px; height: 28px; white-space: nowrap; }
.col h3::after { content: ""; display: block; width: 30px; height: 2px; background: #ccc; margin: 1px 0 0 1px; }
.col ul { list-style: none; margin-top: 16px; }
.col li { line-height: 29px; height: 29px; white-space: nowrap; }
.col .wide { letter-spacing: .12px; }
.col .promo { color: #fff; font-style: italic; letter-spacing: -1px; }
.about p { line-height: 21px; margin: 24px 0 20px; white-space: nowrap; }
.contact { display: flex; align-items: center; gap: 9px; height: 28px; padding-left: 1px; white-space: nowrap; }
.contact svg { fill: #777; }
.contact .address { letter-spacing: -.42px; }
.cards { display: flex; gap: 10px; margin: 22px 0 0 1px; font-family: "Open Sans", sans-serif; font-weight: 700; letter-spacing: 0; }
.rule { height: 1px; margin-left: 1px; background: #1c1c1c; }
.to-top { position: absolute; left: 1519px; top: 960px; width: 43px; height: 43px; border-radius: 50%; background: #fff; display: flex; align-items: center; justify-content: center; }
.to-top svg { fill: none; stroke: #333; stroke-width: 1.1; }
```
